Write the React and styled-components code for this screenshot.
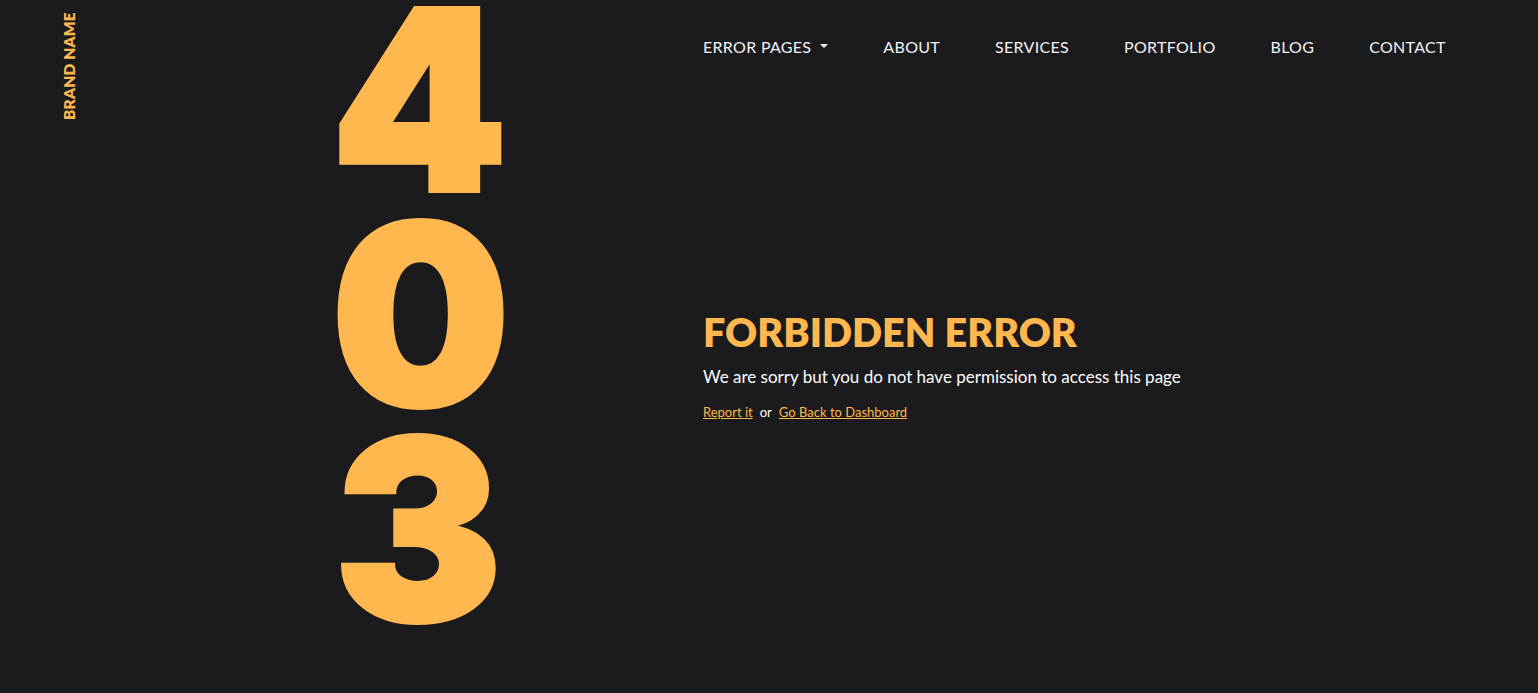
import React from 'react';
import styled, { createGlobalStyle } from 'styled-components';

const GlobalStyle = createGlobalStyle`
  html, body {
    margin: 0;
    padding: 0;
    background: #1b1b1d;
  }
  body {
    font-family: 'Lato', 'Open Sans', sans-serif;
    color: #ffffff;
  }
`;

const navItems = ['About', 'Services', 'Portfolio', 'Blog', 'Contact'];

const App = () => {
  return (
    <>
      <GlobalStyle />
      <Page>
        <BrandColumn>
          <Brand>Brand Name</Brand>
        </BrandColumn>
        <Code>
          <Digit>4</Digit>
          <Digit>0</Digit>
          <Digit>3</Digit>
        </Code>
        <Main>
          <Nav>
            <NavLink href="#">
              Error Pages
              <Caret />
            </NavLink>
            {navItems.map((item) => (
              <NavLink key={item} href="#">{item}</NavLink>
            ))}
          </Nav>
          <Message>
            <Title>Forbidden Error</Title>
            <Text>We are sorry but you do not have permission to access this page</Text>
            <Links>
              <TextLink href="#">Report it</TextLink>
              <span>or</span>
              <TextLink href="#">Go Back to Dashboard</TextLink>
            </Links>
          </Message>
        </Main>
      </Page>
    </>
  );
};

const Page = styled.div`
  display: flex;
  height: 693px;
  overflow: hidden;
`;

const BrandColumn = styled.div`
  width: 136px;
  display: flex;
  justify-content: flex-start;
  padding-left: 60px;
  padding-top: 14px;
  box-sizing: border-box;
`;

const Brand = styled.a`
  writing-mode: vertical-rl;
  transform: rotate(180deg);
  height: 106px;
  font-size: 15.5px;
  font-weight: 800;
  text-transform: uppercase;
  color: #ffb74f;
  letter-spacing: 0.2px;
  white-space: nowrap;
`;

const Code = styled.div`
  width: 567px;
  padding-left: 195px;
  box-sizing: border-box;
  display: flex;
  flex-direction: column;
`;

const Digit = styled.span`
  display: block;
  width: 174px;
  height: 215px;
  text-align: center;
  font-family: 'Inter', 'Lato', sans-serif;
  font-size: 252px;
  line-height: 200px;
  font-weight: 900;
  color: #ffb74f;
  -webkit-text-stroke: 4px #ffb74f;
`;

const Main = styled.div`
  flex: 1;
  display: flex;
  flex-direction: column;
`;

const Nav = styled.nav`
  display: flex;
  align-items: center;
  gap: 55px;
  padding-top: 35px;
  height: 22px;
`;

const NavLink = styled.a`
  display: flex;
  align-items: center;
  gap: 9px;
  font-size: 16px;
  text-transform: uppercase;
  color: #f2f2f2;
  text-decoration: none;
  letter-spacing: 0.3px;
`;

const Caret = styled.span`
  width: 0;
  height: 0;
  border-left: 4px solid transparent;
  border-right: 4px solid transparent;
  border-top: 4px solid #f2f2f2;
`;

const Message = styled.div`
  margin-top: 252px;
`;

const Title = styled.h1`
  margin: 0;
  font-size: 39.5px;
  line-height: 46px;
  font-weight: 800;
  text-transform: uppercase;
  color: #ffb74f;
`;

const Text = styled.p`
  margin: 10px 0 0;
  font-size: 17px;
  line-height: 24px;
  color: #ffffff;
`;

const Links = styled.div`
  display: flex;
  gap: 7px;
  margin-top: 15px;
  font-size: 13px;
  color: #ffffff;
`;

const TextLink = styled.a`
  color: #ffb74f;
  text-decoration: underline;
`;

export default App;
